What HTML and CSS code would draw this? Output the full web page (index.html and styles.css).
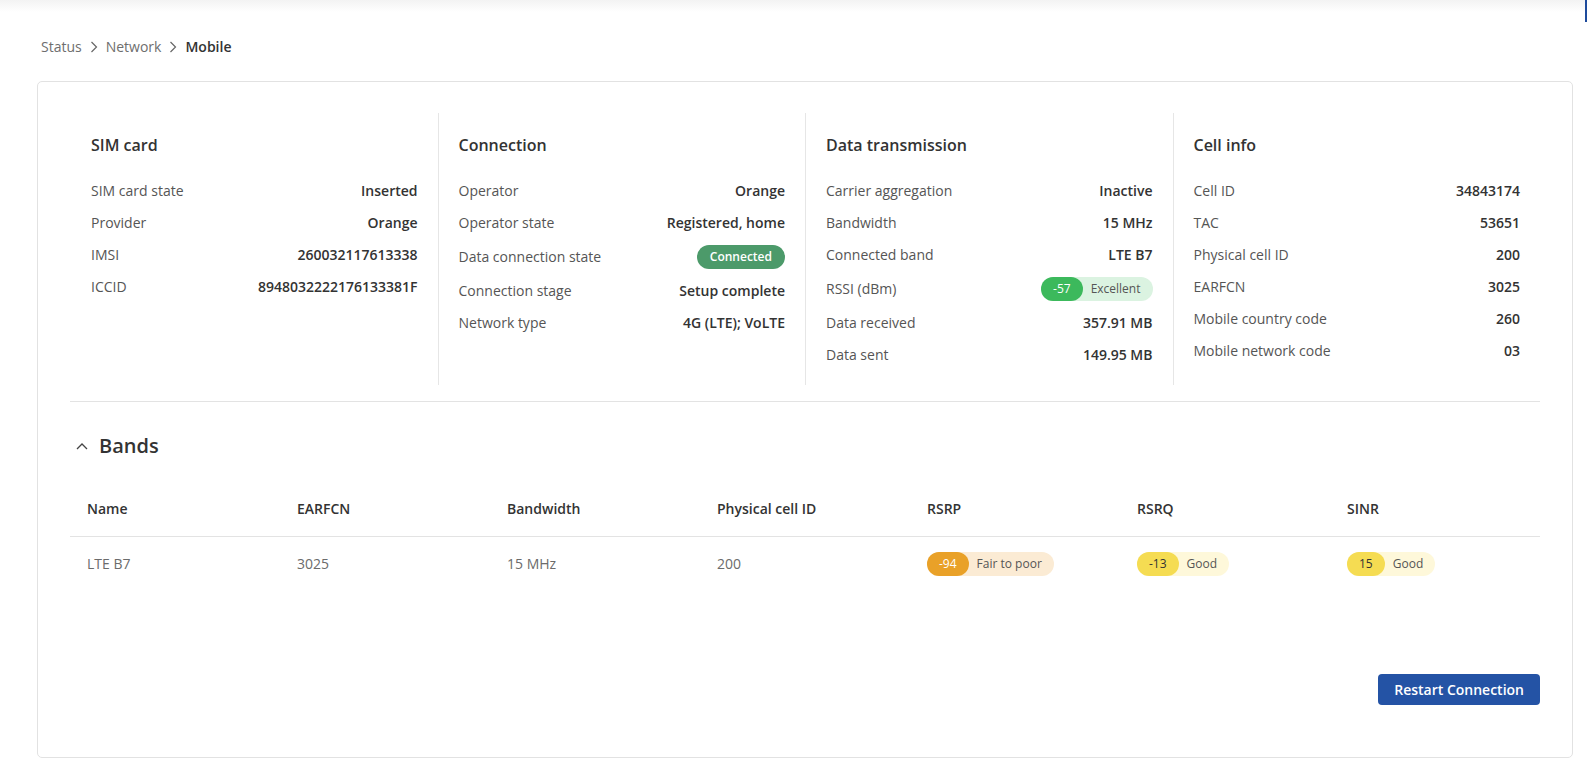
FILE: index.html
```html
<!DOCTYPE html>
<html lang="en">
<head>
<meta charset="utf-8">
<title>Mobile</title>
<link rel="stylesheet" href="styles.css">
</head>
<body>
<div class="topbar"></div>
<div class="edge-mark"></div>
<div class="page">
  <nav class="breadcrumb">
    <span class="crumb">Status</span>
    <svg class="crumb-sep" width="8" height="12" viewBox="0 0 8 12"><path d="M1.5 1 L6.5 6 L1.5 11" fill="none" stroke="#666" stroke-width="1.2"/></svg>
    <span class="crumb">Network</span>
    <svg class="crumb-sep" width="8" height="12" viewBox="0 0 8 12"><path d="M1.5 1 L6.5 6 L1.5 11" fill="none" stroke="#666" stroke-width="1.2"/></svg>
    <span class="crumb current">Mobile</span>
  </nav>

  <section class="card">
    <div class="info-grid">
      <div class="info-col">
        <h3 class="col-title">SIM card</h3>
        <div class="row"><span class="label">SIM card state</span><span class="value">Inserted</span></div>
        <div class="row"><span class="label">Provider</span><span class="value">Orange</span></div>
        <div class="row"><span class="label">IMSI</span><span class="value">260032117613338</span></div>
        <div class="row"><span class="label">ICCID</span><span class="value">8948032222176133381F</span></div>
      </div>
      <div class="info-col">
        <h3 class="col-title">Connection</h3>
        <div class="row"><span class="label">Operator</span><span class="value">Orange</span></div>
        <div class="row"><span class="label">Operator state</span><span class="value">Registered, home</span></div>
        <div class="row badge-row"><span class="label">Data connection state</span><span class="status-badge">Connected</span></div>
        <div class="row"><span class="label">Connection stage</span><span class="value">Setup complete</span></div>
        <div class="row"><span class="label">Network type</span><span class="value">4G (LTE); VoLTE</span></div>
      </div>
      <div class="info-col">
        <h3 class="col-title">Data transmission</h3>
        <div class="row"><span class="label">Carrier aggregation</span><span class="value">Inactive</span></div>
        <div class="row"><span class="label">Bandwidth</span><span class="value">15 MHz</span></div>
        <div class="row"><span class="label">Connected band</span><span class="value">LTE B7</span></div>
        <div class="row badge-row"><span class="label">RSSI (dBm)</span><span class="signal green"><span class="sig-val">-57</span><span class="sig-label">Excellent</span></span></div>
        <div class="row"><span class="label">Data received</span><span class="value">357.91 MB</span></div>
        <div class="row"><span class="label">Data sent</span><span class="value">149.95 MB</span></div>
      </div>
      <div class="info-col">
        <h3 class="col-title">Cell info</h3>
        <div class="row"><span class="label">Cell ID</span><span class="value">34843174</span></div>
        <div class="row"><span class="label">TAC</span><span class="value">53651</span></div>
        <div class="row"><span class="label">Physical cell ID</span><span class="value">200</span></div>
        <div class="row"><span class="label">EARFCN</span><span class="value">3025</span></div>
        <div class="row"><span class="label">Mobile country code</span><span class="value">260</span></div>
        <div class="row"><span class="label">Mobile network code</span><span class="value">03</span></div>
      </div>
    </div>

    <div class="divider"></div>

    <div class="bands-title">
      <svg class="collapse-icon" width="12" height="8" viewBox="0 0 12 8"><path d="M1 7 L6 2 L11 7" fill="none" stroke="#444" stroke-width="1.3"/></svg>
      <span>Bands</span>
    </div>

    <table class="bands">
      <thead>
        <tr><th>Name</th><th>EARFCN</th><th>Bandwidth</th><th>Physical cell ID</th><th>RSRP</th><th>RSRQ</th><th>SINR</th></tr>
      </thead>
      <tbody>
        <tr>
          <td>LTE B7</td>
          <td>3025</td>
          <td>15 MHz</td>
          <td>200</td>
          <td><span class="signal orange"><span class="sig-val">-94</span><span class="sig-label">Fair to poor</span></span></td>
          <td><span class="signal yellow"><span class="sig-val">-13</span><span class="sig-label">Good</span></span></td>
          <td><span class="signal yellow"><span class="sig-val">15</span><span class="sig-label">Good</span></span></td>
        </tr>
      </tbody>
    </table>

    <div class="actions">
      <button class="btn-primary">Restart Connection</button>
    </div>
  </section>
</div>
</body>
</html>
```

FILE: styles.css
```css
* { box-sizing: border-box; }

html, body {
  margin: 0;
  padding: 0;
  background: #ffffff;
  font-family: "Open Sans", "Noto Sans", "Liberation Sans", sans-serif;
  font-size: 14px;
  color: #333333;
}

.topbar {
  height: 12px;
  background: linear-gradient(#f3f3f3, #ffffff);
}

.edge-mark {
  position: absolute;
  top: 0;
  right: 0;
  width: 2px;
  height: 22px;
  background: #1e4b9c;
}

.page {
  padding: 0 14px 0 37px;
}

.breadcrumb {
  display: flex;
  align-items: center;
  gap: 8px;
  margin-top: 25px;
  padding-left: 4px;
  line-height: 20px;
  height: 20px;
}

.crumb { color: #6e6e6e; }
.crumb.current { color: #333333; font-weight: 600; }
.crumb-sep { display: block; }

.card {
  margin-top: 24px;
  border: 1px solid #e2e2e2;
  border-radius: 5px;
  padding: 31px 32px 32px;
}

.info-grid {
  display: grid;
  grid-template-columns: repeat(4, 1fr);
}

.info-col {
  padding: 20px 20px 14px;
  border-left: 1px solid #e6e6e6;
}

.info-col:first-child { border-left-color: transparent; }

.col-title {
  margin: 0 0 18px;
  font-size: 16px;
  line-height: 24px;
  font-weight: 600;
  color: #333333;
}

.row {
  display: flex;
  justify-content: space-between;
  align-items: center;
  padding: 6px 0;
  line-height: 20px;
}

.label { color: #555555; }
.value { color: #333333; font-weight: 600; }

.status-badge {
  display: inline-block;
  height: 24px;
  line-height: 24px;
  padding: 0 13px;
  border-radius: 12px;
  background: #4c9a6a;
  color: #ffffff;
  font-size: 12px;
  font-weight: 600;
}

.signal {
  display: inline-flex;
  align-items: center;
  height: 24px;
  border-radius: 12px;
  font-size: 12px;
  line-height: 24px;
}

.sig-val {
  height: 24px;
  padding: 0 12px;
  border-radius: 12px;
}

.sig-label {
  padding: 0 12px 0 8px;
  color: #555555;
}

.signal.green { background: #dbf3e1; }
.signal.green .sig-val { background: #3cb95c; color: #ffffff; }

.signal.orange { background: #fbebd4; }
.signal.orange .sig-val { background: #e9a128; color: #ffffff; }

.signal.yellow { background: #fef8da; }
.signal.yellow .sig-val { background: #f5dc52; color: #333333; }

.divider {
  margin-top: 16px;
  height: 1px;
  background: #e3e3e3;
}

.bands-title {
  display: flex;
  align-items: center;
  gap: 11px;
  margin-top: 30px;
  padding-left: 6px;
  font-size: 20px;
  line-height: 28px;
  font-weight: 600;
  color: #333333;
}

.collapse-icon { display: block; }

.bands {
  width: 100%;
  margin-top: 22px;
  border-collapse: collapse;
  table-layout: fixed;
}

.bands th {
  text-align: left;
  font-weight: 600;
  color: #333333;
  padding: 17px 17px;
  line-height: 20px;
  border-bottom: 1px solid #e3e3e3;
}

.bands td {
  padding: 14px 17px;
  line-height: 24px;
  color: #6b6b6b;
  vertical-align: middle;
}

.actions {
  display: flex;
  justify-content: flex-end;
  margin-top: 84px;
  margin-bottom: 20px;
}

.btn-primary {
  height: 31px;
  padding: 0 16px;
  border: none;
  border-radius: 4px;
  background: #2453a5;
  color: #ffffff;
  font-family: "Open Sans", "Noto Sans", "Liberation Sans", sans-serif;
  font-size: 14px;
  font-weight: 600;
  cursor: pointer;
}
```
